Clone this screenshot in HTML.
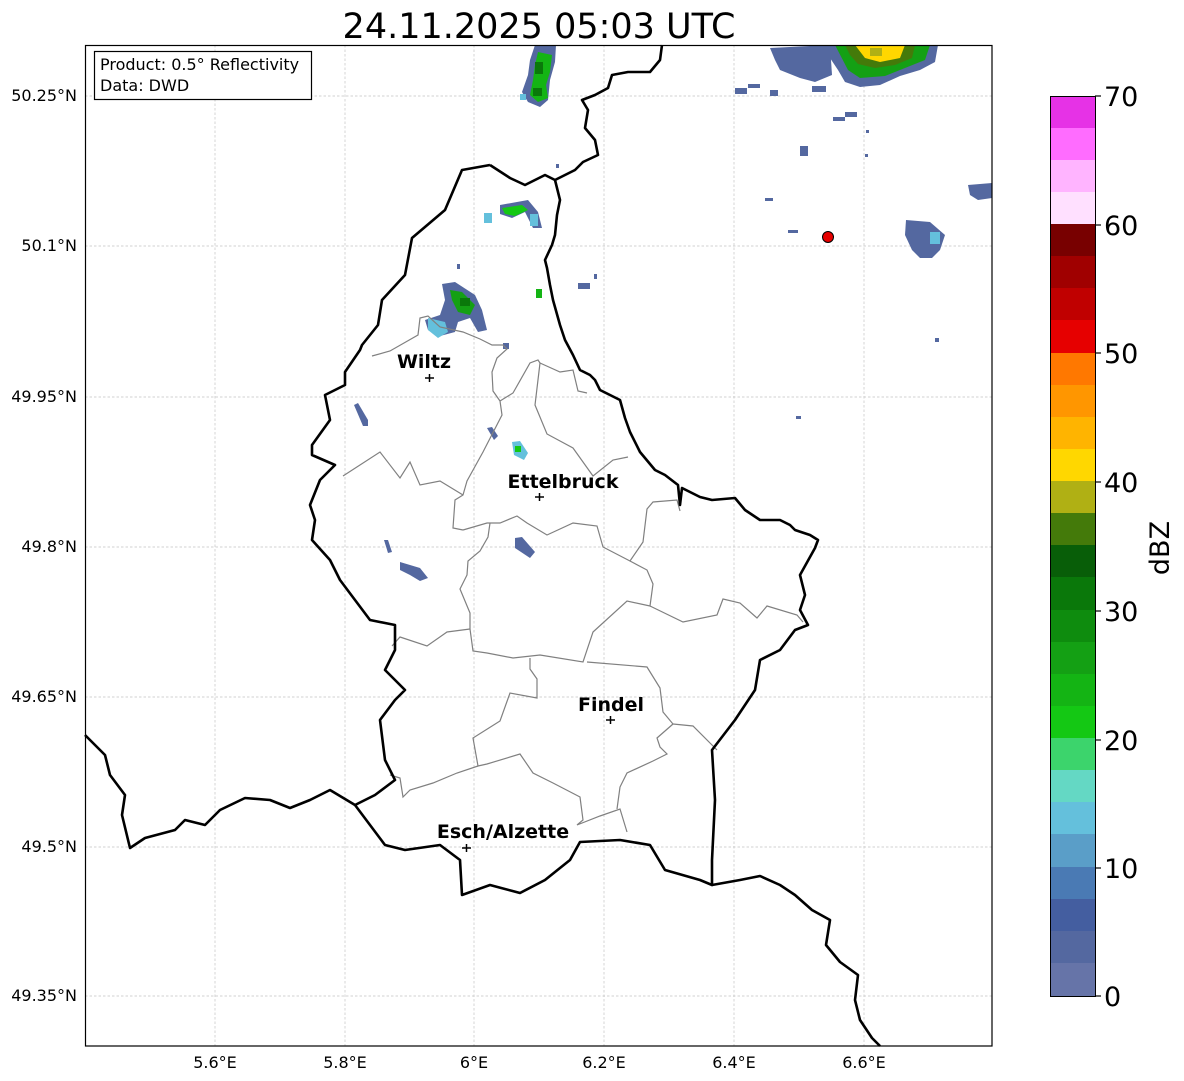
<!DOCTYPE html>
<html><head><meta charset="utf-8"><style>
html,body{margin:0;padding:0;background:#fff;}
svg{display:block;}
text{font-family:"DejaVu Sans","Liberation Sans",sans-serif;}
</style></head><body>
<svg width="1184" height="1081" viewBox="0 0 1184 1081" xmlns="http://www.w3.org/2000/svg">
<rect width="1184" height="1081" fill="#fff"/>
<text x="539" y="38" font-size="35" text-anchor="middle" fill="#000">24.11.2025 05:03 UTC</text>

<g stroke="#c4c4c4" stroke-width="0.7" stroke-dasharray="2.5,2">
<line x1="215" y1="45" x2="215" y2="1046"/><line x1="345" y1="45" x2="345" y2="1046"/>
<line x1="474" y1="45" x2="474" y2="1046"/><line x1="604" y1="45" x2="604" y2="1046"/>
<line x1="734" y1="45" x2="734" y2="1046"/><line x1="864" y1="45" x2="864" y2="1046"/>
<line x1="85" y1="96" x2="992" y2="96"/><line x1="85" y1="246" x2="992" y2="246"/>
<line x1="85" y1="397" x2="992" y2="397"/><line x1="85" y1="547" x2="992" y2="547"/>
<line x1="85" y1="697" x2="992" y2="697"/><line x1="85" y1="847" x2="992" y2="847"/>
<line x1="85" y1="996" x2="992" y2="996"/>
</g>

<g>
<polygon points="535,45 556,45 555,62 550,80 548,100 540,107 528,102 522,92 528,75 530,60" fill="#5468a0"/>
<polygon points="538,52 552,55 550,72 546,85 548,98 538,102 530,95 533,80 535,65" fill="#14b414"/>
<rect x="535" y="62" width="8" height="12" fill="#0a780a"/><rect x="533" y="88" width="9" height="8" fill="#0a780a"/>
<rect x="520" y="94" width="6" height="6" fill="#64c0dc"/>
<polygon points="828,45 938,45 935,62 920,70 900,76 880,85 860,87 845,82 838,70 830,58" fill="#5468a0"/>
<polygon points="835,45 930,45 925,60 905,68 885,76 860,78 848,70" fill="#14a014"/>
<polygon points="845,45 915,45 912,58 895,65 875,68 858,64 850,55" fill="#447a0a"/>
<polygon points="855,45 905,45 900,58 880,62 865,58" fill="#ffd700"/>
<rect x="870" y="48" width="12" height="8" fill="#b0b014"/>
<polygon points="770,48 830,45 832,75 815,82 800,78 790,74 780,70 775,60" fill="#5468a0"/>
<rect x="735" y="88" width="12" height="6" fill="#5468a0"/><rect x="748" y="84" width="12" height="4" fill="#5468a0"/>
<rect x="770" y="90" width="8" height="6" fill="#5468a0"/><rect x="812" y="86" width="14" height="6" fill="#5468a0"/>
<rect x="833" y="117" width="12" height="4" fill="#5468a0"/><rect x="845" y="112" width="12" height="5" fill="#5468a0"/>
<rect x="800" y="146" width="8" height="10" fill="#5468a0"/><rect x="866" y="130" width="3" height="3" fill="#5468a0"/>
<rect x="865" y="154" width="3" height="3" fill="#5468a0"/><rect x="788" y="230" width="10" height="3" fill="#5468a0"/>
<rect x="765" y="198" width="8" height="3" fill="#5468a0"/>
<polygon points="968,185 992,183 992,198 978,200 970,195" fill="#5468a0"/>
<polygon points="906,220 930,222 945,235 940,250 932,258 920,258 912,250 905,235" fill="#5468a0"/>
<rect x="930" y="232" width="10" height="12" fill="#64c0dc"/>
<rect x="935" y="338" width="4" height="4" fill="#5468a0"/><rect x="796" y="416" width="5" height="3" fill="#5468a0"/>
<polygon points="500,205 528,200 538,212 542,228 533,228 525,212 512,218 500,214" fill="#5468a0"/>
<polygon points="502,208 522,205 528,210 515,216 505,214" fill="#14c814"/>
<rect x="530" y="214" width="8" height="12" fill="#64c0dc"/><rect x="484" y="213" width="8" height="10" fill="#64c0dc"/>
<polygon points="442,284 455,282 475,295 482,310 487,330 478,332 470,318 458,322 455,332 440,336 428,330 425,320 440,315 445,300" fill="#5468a0"/>
<polygon points="450,290 462,292 475,305 470,315 458,312 452,300" fill="#14a014"/>
<rect x="460" y="298" width="10" height="8" fill="#0a780a"/>
<polygon points="428,318 445,322 448,332 438,338 428,330" fill="#64c0dc"/>
<rect x="536" y="289" width="6" height="9" fill="#14b414"/><rect x="556" y="164" width="3" height="4" fill="#5468a0"/>
<rect x="578" y="283" width="12" height="6" fill="#5468a0"/><rect x="594" y="274" width="3" height="5" fill="#5468a0"/>
<rect x="503" y="343" width="6" height="6" fill="#5468a0"/><rect x="457" y="264" width="3" height="5" fill="#5468a0"/>
<polygon points="354,405 358,403 368,420 368,426 363,426" fill="#5468a0"/>
<polygon points="487,428 492,427 498,436 494,440" fill="#5468a0"/>
<polygon points="512,442 520,441 528,453 524,460 514,455" fill="#64c0dc"/><rect x="515" y="446" width="6" height="6" fill="#14c814"/>
<polygon points="384,540 388,540 392,552 388,553" fill="#5468a0"/>
<polygon points="400,562 410,565 420,568 428,578 420,581 410,575 400,570" fill="#5468a0"/>
<polygon points="515,538 522,537 535,552 530,558 515,548" fill="#5468a0"/>
</g>

<g fill="none" stroke="#808080" stroke-width="1.2">
<polyline points="343,476 380,452 400,478 410,462 420,485 440,481 463,495"/>
<polyline points="372,356 390,351 418,335 420,318 428,316 440,327 463,332 480,339 492,345 503,345 507,349 497,358 492,372 493,391 500,401 502,415 483,452 467,481 463,495 455,500 453,528 463,530"/>
<polyline points="500,401 513,393 530,363 538,360 540,363 535,405 547,434 573,448 593,476 613,460 628,457"/>
<polyline points="540,363 560,372 573,370 578,391 587,393"/>
<polyline points="463,530 487,523 500,523 517,516 527,523 547,535 573,523 597,526 603,547 630,561 643,542 647,509 653,502 677,500 680,511"/>
<polyline points="490,523 488,537 480,551 468,561 467,575 460,589 470,613 470,629 473,651 487,653 513,658 540,655 583,662 593,632 627,601 650,606 653,584 647,570 630,561"/>
<polyline points="650,606 683,622 717,615 723,599 740,603 757,618 767,606 797,615 803,622"/>
<polyline points="470,629 447,632 427,646 400,637 392,646"/>
<polyline points="530,658 530,669 537,679 537,698 510,693 500,721 473,738 478,766 487,764 520,754 533,773 553,783 580,797 583,820 577,825 600,816 620,809 627,832"/>
<polyline points="478,766 457,773 433,783 410,790 403,797 400,778 390,775"/>
<polyline points="587,662 647,667 660,688 663,712 673,724 657,738 660,747 667,754 653,761 627,773 620,787 617,809"/>
<polyline points="673,724 693,726 717,750"/>
</g>

<g fill="none" stroke="#000" stroke-width="2.6" stroke-linejoin="round">
<polyline points="490,165 462,170 445,210 412,238 405,275 382,300 378,325 362,345 360,350 345,372 345,385 325,395 330,420 312,445 312,455 335,465 320,480 310,505 315,520 312,540 330,560 340,580 355,600 370,620 395,625 395,650 385,670 405,690 395,700 380,720 385,760 395,780 375,795 355,805 370,825 385,845 405,850 440,845 460,860 462,895 490,885 520,893 545,880 570,860 580,842 620,840 650,845 665,870 700,880 712,885 712,860 715,800 712,750 735,720 755,690 760,660 780,650 795,630 808,625 800,610 805,595 800,575 815,548 818,540 810,535 795,530 790,525 780,520 760,520 745,510 735,498 712,500 700,497 690,492 682,488 680,505 678,485 665,475 655,470 640,452 630,432 625,418 620,400 600,390 595,380 590,375 580,370 573,355 565,340 560,325 553,300 550,285 547,268 545,260 552,245 555,235 557,215 560,200 555,180 545,175 525,185 510,178 490,165"/>
<polyline points="555,180 575,170 583,162 598,155 595,140 585,128 588,110 582,100 595,95 608,88 612,75 628,72 650,72 660,60 662,45"/>
<polyline points="85,735 105,755 110,775 125,795 122,815 130,848 145,838 175,830 185,820 205,825 220,810 245,798 270,800 290,808 310,800 320,795 330,790 355,805"/>
<polyline points="712,885 740,880 760,876 780,885 795,895 812,910 830,920 826,945 840,962 858,975 855,1000 860,1020 872,1038 880,1046"/>
</g>

<circle cx="828" cy="237" r="5.5" fill="#e60000" stroke="#000" stroke-width="1"/>

<g font-size="19" font-weight="bold" text-anchor="middle" fill="#000">
<text x="424" y="368">Wiltz</text>
<text x="563" y="488">Ettelbruck</text>
<text x="611" y="711">Findel</text>
<text x="503" y="838">Esch/Alzette</text>
</g>
<g stroke="#000" stroke-width="1.5">
<line x1="425" y1="378" x2="434" y2="378"/><line x1="429.5" y1="374" x2="429.5" y2="382"/>
<line x1="535" y1="497" x2="544" y2="497"/><line x1="539.5" y1="493" x2="539.5" y2="501"/>
<line x1="606" y1="720" x2="615" y2="720"/><line x1="610.5" y1="716" x2="610.5" y2="724"/>
<line x1="462" y1="848" x2="471" y2="848"/><line x1="466.5" y1="844" x2="466.5" y2="852"/>
</g>

<rect x="85.5" y="45.5" width="906.5" height="1000.5" fill="none" stroke="#000" stroke-width="1.2"/>

<rect x="94.5" y="51.5" width="217" height="48" fill="#fff" stroke="#000" stroke-width="1.2"/>
<text x="100" y="70" font-size="16">Product: 0.5° Reflectivity</text>
<text x="100" y="91" font-size="16">Data: DWD</text>

<g font-size="16" text-anchor="end" fill="#000">
<text x="77" y="101">50.25°N</text><text x="77" y="251">50.1°N</text>
<text x="77" y="402">49.95°N</text><text x="77" y="552">49.8°N</text>
<text x="77" y="702">49.65°N</text><text x="77" y="852">49.5°N</text>
<text x="77" y="1001">49.35°N</text>
</g>
<g font-size="16" text-anchor="middle" fill="#000">
<text x="215" y="1068">5.6°E</text><text x="345" y="1068">5.8°E</text>
<text x="474" y="1068">6°E</text><text x="604" y="1068">6.2°E</text>
<text x="734" y="1068">6.4°E</text><text x="864" y="1068">6.6°E</text>
</g>

<g shape-rendering="crispEdges">
<rect x="1050" y="96" width="45" height="33" fill="#e632e6"/>
<rect x="1050" y="128" width="45" height="33" fill="#ff6cff"/>
<rect x="1050" y="160" width="45" height="33" fill="#ffb4ff"/>
<rect x="1050" y="192" width="45" height="33" fill="#ffe0ff"/>
<rect x="1050" y="224" width="45" height="33" fill="#780000"/>
<rect x="1050" y="256" width="45" height="33" fill="#a00000"/>
<rect x="1050" y="288" width="45" height="33" fill="#c00000"/>
<rect x="1050" y="320" width="45" height="34" fill="#e60000"/>
<rect x="1050" y="353" width="45" height="33" fill="#ff7800"/>
<rect x="1050" y="385" width="45" height="33" fill="#ff9600"/>
<rect x="1050" y="417" width="45" height="33" fill="#ffb400"/>
<rect x="1050" y="449" width="45" height="33" fill="#ffd700"/>
<rect x="1050" y="481" width="45" height="33" fill="#b0b014"/>
<rect x="1050" y="513" width="45" height="33" fill="#447a0a"/>
<rect x="1050" y="545" width="45" height="33" fill="#085e08"/>
<rect x="1050" y="577" width="45" height="34" fill="#0a780a"/>
<rect x="1050" y="610" width="45" height="33" fill="#0e8c0e"/>
<rect x="1050" y="642" width="45" height="33" fill="#14a014"/>
<rect x="1050" y="674" width="45" height="33" fill="#14b414"/>
<rect x="1050" y="706" width="45" height="33" fill="#14c814"/>
<rect x="1050" y="738" width="45" height="33" fill="#3cd46c"/>
<rect x="1050" y="770" width="45" height="33" fill="#64d8c4"/>
<rect x="1050" y="802" width="45" height="33" fill="#64c0dc"/>
<rect x="1050" y="834" width="45" height="34" fill="#5a9ec8"/>
<rect x="1050" y="867" width="45" height="33" fill="#4a7ab4"/>
<rect x="1050" y="899" width="45" height="33" fill="#445ea0"/>
<rect x="1050" y="931" width="45" height="33" fill="#5468a0"/>
<rect x="1050" y="963" width="45" height="33" fill="#6674a8"/>
</g>
<rect x="1050.5" y="96.5" width="45" height="900" fill="none" stroke="#000" stroke-width="1"/>
<g stroke="#000" stroke-width="1.2">
<line x1="1095" y1="96" x2="1101" y2="96"/><line x1="1095" y1="225" x2="1101" y2="225"/>
<line x1="1095" y1="353" x2="1101" y2="353"/><line x1="1095" y1="482" x2="1101" y2="482"/>
<line x1="1095" y1="611" x2="1101" y2="611"/><line x1="1095" y1="740" x2="1101" y2="740"/>
<line x1="1095" y1="868" x2="1101" y2="868"/><line x1="1095" y1="996" x2="1101" y2="996"/>
</g>
<g font-size="27" fill="#000">
<text x="1104" y="106">70</text><text x="1104" y="235">60</text>
<text x="1104" y="363">50</text><text x="1104" y="492">40</text>
<text x="1104" y="621">30</text><text x="1104" y="750">20</text>
<text x="1104" y="878">10</text><text x="1104" y="1006">0</text>
</g>
<text x="0" y="0" font-size="27" text-anchor="middle" transform="translate(1169,548) rotate(-90)">dBZ</text>
</svg>
</body></html>
